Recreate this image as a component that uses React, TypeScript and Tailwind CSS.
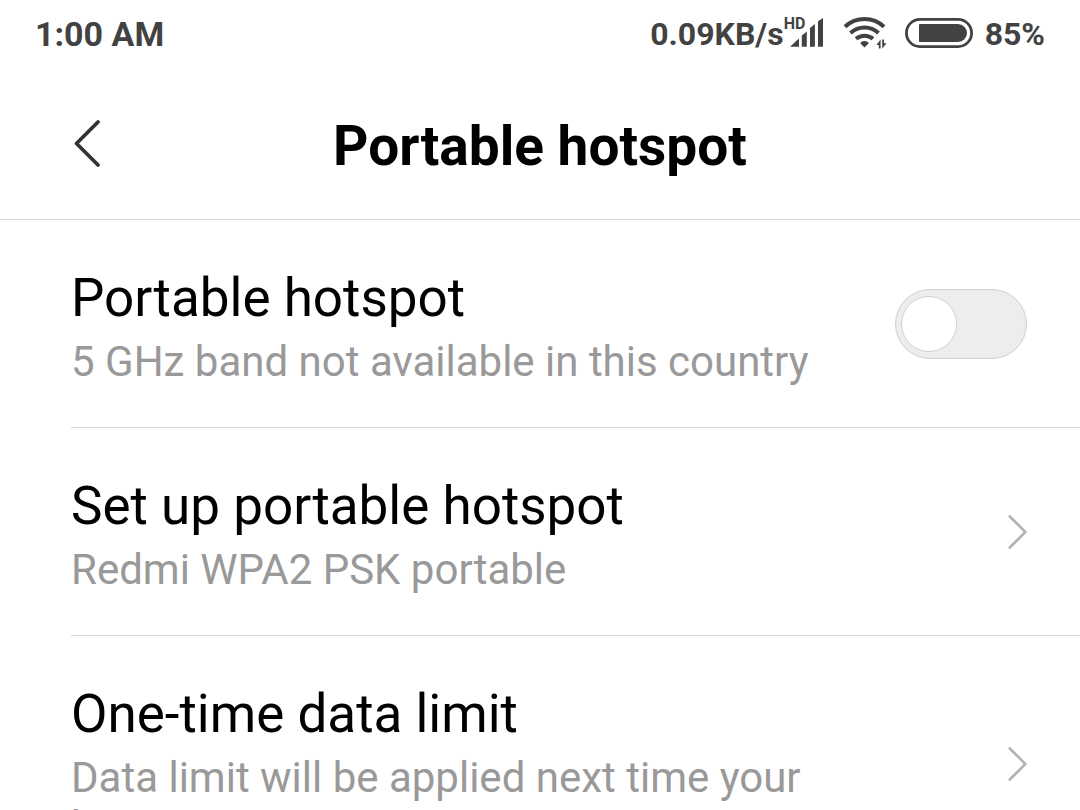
import { useState } from "react"

const dataRows = [
  {
    title: "Set up portable hotspot",
    summary: "Redmi WPA2 PSK portable",
  },
  {
    title: "One-time data limit",
    summary: "Data limit will be applied next time your hotspot runs",
  },
]

function SignalIcon() {
  return (
    <div className="relative h-8 w-10">
      <span className="absolute left-0 -top-[3px] text-base leading-[18px] font-bold">HD</span>
      <svg viewBox="0 0 40 32" className="h-8 w-10" fill="currentColor" aria-hidden="true">
        <path d="M6 28.8L15 20.5V28.8Z" />
        <path d="M17.8 17.5L22.8 13.5V28.8H17.8Z" />
        <path d="M26 10L30.9 6V28.8H26Z" />
        <path d="M34 3.2L39 0V28.8H34Z" />
      </svg>
    </div>
  )
}

function WifiIcon() {
  return (
    <svg viewBox="0 0 46 36" className="h-9 w-[46px]" fill="none" stroke="currentColor" strokeWidth="4" aria-hidden="true">
      <path d="M2 10.8A28.5 28.5 0 0 1 41 10.8" />
      <path d="M7.5 17A20.5 20.5 0 0 1 35.5 17" />
      <path d="M13 22.8A13 13 0 0 1 30 22.8" />
      <path d="M21.5 31.4L17.4 27.6Q17.6 25 21.5 25Q25.4 25 25.6 27.6Z" fill="currentColor" stroke="none" />
      {/* data arrows */}
      <path d="M37.6 23.6V32.6H35.8V28.9H33.4ZM39.2 32.6V23.6H41V27.3H43.6Z" fill="currentColor" stroke="none" />
    </svg>
  )
}

function BatteryIcon() {
  return (
    <svg viewBox="0 0 68 32" className="h-8 w-[68px]" aria-hidden="true">
      <rect x="1.4" y="1.4" width="65.2" height="27.2" rx="13.6" fill="none" stroke="currentColor" strokeWidth="2.8" />
      <path d="M15 6H53A9 9 0 0 1 53 24H15Q14 24 14 23V7Q14 6 15 6Z" fill="currentColor" />
    </svg>
  )
}

function StatusBar() {
  return (
    <div className="flex h-[68px] items-center justify-between px-[35px] text-[34px] leading-10 font-bold text-[#424242]">
      <span>1:00 AM</span>
      <div className="flex items-center text-[32px]">
        <span>0.09KB/s</span>
        <SignalIcon />
        <div className="ml-[19px] flex items-center gap-4">
          <WifiIcon />
          <div className="flex items-center gap-3">
            <BatteryIcon />
            <span>85%</span>
          </div>
        </div>
      </div>
    </div>
  )
}

function RowText({ title, summary }: { title: string; summary: string }) {
  return (
    <span className="flex flex-1 flex-col gap-2 pt-[47px] pb-[41px]">
      <span className="text-[53px] leading-[62px] text-black">{title}</span>
      <span className="text-[42px] leading-[49px] text-[#999999]">{summary}</span>
    </span>
  )
}

export default function App() {
  const [enabled, setEnabled] = useState(false)

  return (
    <div className="min-h-screen bg-white font-['Roboto',sans-serif]">
      <StatusBar />

      {/* Header */}
      <header className="grid h-[152px] grid-cols-[1fr_auto_1fr] items-center border-b border-[#d9d9d9] px-[72px]">
        <button type="button" aria-label="Back" className="justify-self-start">
          <svg viewBox="0 0 30 50" className="h-[50px] w-[30px]" fill="none" stroke="#333333" strokeWidth="3.8" strokeLinecap="round" strokeLinejoin="round">
            <path d="M26 3L4.5 24.5L26 46" />
          </svg>
        </button>
        <h1 className="pt-1 text-[55px] leading-[66px] font-bold text-black">Portable hotspot</h1>
      </header>

      {/* Settings */}
      <main className="pl-[71px]">
        <label className="flex items-center gap-20 border-b border-[#d9d9d9] pr-[53px]">
          <RowText title="Portable hotspot" summary="5 GHz band not available in this country" />
          <input
            type="checkbox"
            role="switch"
            checked={enabled}
            onChange={(e) => setEnabled(e.target.checked)}
            className="flex h-[70px] w-[132px] shrink-0 appearance-none items-center rounded-full border border-[#d0d0d0] bg-[#ededed] px-[5px] before:size-14 before:rounded-full before:border before:border-[#d0d0d0] before:bg-white before:content-[''] checked:justify-end checked:bg-[#0d84ff]"
          />
        </label>

        {dataRows.map((row) => (
          <button
            key={row.title}
            type="button"
            className="flex w-full items-center gap-20 border-b border-[#d9d9d9] pr-[53px] text-left"
          >
            <RowText title={row.title} summary={row.summary} />
            <svg viewBox="0 0 20 36" className="h-9 w-5 shrink-0" fill="none" stroke="#b3b3b3" strokeWidth="2.6" strokeLinecap="round" strokeLinejoin="round" aria-hidden="true">
              <path d="M2.8 2.5L18.3 18L2.8 33.5" />
            </svg>
          </button>
        ))}
      </main>
    </div>
  )
}
